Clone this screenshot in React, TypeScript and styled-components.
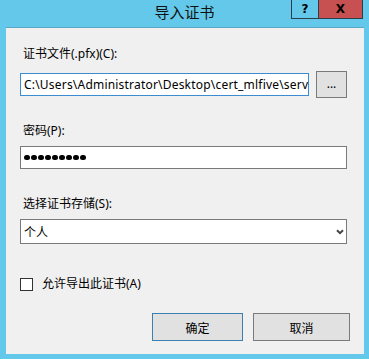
import React from "react";
import styled, { createGlobalStyle } from "styled-components";

const Global = createGlobalStyle`
  html, body { margin: 0; padding: 0; }
  body { background: #64C8EA; }
`;

const Window = styled.div`
  width: 369px;
  height: 359px;
  background: #64C8EA;
  display: flex;
  flex-direction: column;
  font-family: "Noto Sans", "Noto Sans CJK SC", sans-serif;
  font-size: 12px;
  color: #000;
  box-sizing: border-box;
`;

const TitleBar = styled.div`
  height: 27px;
  display: grid;
  grid-template-columns: 1fr auto 1fr;
  align-items: start;
  flex-shrink: 0;
`;

const Title = styled.div`
  grid-column: 2;
  font-family: "Noto Sans CJK SC", sans-serif;
  font-size: 15px;
  line-height: 24px;
  color: #111;
`;

const Controls = styled.div`
  grid-column: 3;
  justify-self: end;
  margin-right: 6px;
  display: flex;
  height: 19px;
`;

const CtrlButton = styled.div<{ $w: number; $bg: string }>`
  width: ${(p) => p.$w}px;
  height: 19px;
  box-sizing: border-box;
  background: ${(p) => p.$bg};
  border: 1px solid #2d3e48;
  border-top: none;
  & + & { border-left: none; }
  display: flex;
  align-items: center;
  justify-content: center;
  font-family: "DejaVu Sans", sans-serif;
  font-weight: bold;
  font-size: 12px;
  color: #000;
  line-height: 1;
`;

const Panel = styled.div`
  margin: 0 5px 5px 6px;
  flex: 1;
  background: #F0F0F0;
  border-top: 1px solid #5aa9c4;
  padding: 18px 17px 0 14px;
  display: flex;
  flex-direction: column;
`;

const Label = styled.div<{ $mt?: number }>`
  font-family: "Noto Sans", "Noto Sans CJK SC", sans-serif;
  font-size: 12px;
  line-height: 16px;
  margin-left: 3px;
  margin-top: ${(p) => p.$mt ?? 0}px;
  color: #000;
`;

const Row = styled.div<{ $mt?: number }>`
  display: flex;
  align-items: center;
  margin-top: ${(p) => p.$mt ?? 0}px;
`;

const Field = styled.div<{ $w?: number; $h: number; $focus?: boolean }>`
  ${(p) => (p.$w ? `width: ${p.$w}px;` : "flex: 1;")}
  height: ${(p) => p.$h}px;
  box-sizing: border-box;
  background: #fff;
  border: 1px solid ${(p) => (p.$focus ? "#3C8DD0" : "#7A7A7A")};
  display: flex;
  align-items: center;
  padding: 0 2px 0 3px;
  overflow: hidden;
  white-space: nowrap;
  font-size: 12px;
`;

const PathText = styled.span`
  font-family: "Noto Sans", sans-serif;
  font-size: 12px;
  letter-spacing: 0.2px;
`;

const BrowseButton = styled.div`
  width: 31px;
  height: 27px;
  box-sizing: border-box;
  margin-left: 7px;
  background: #E1E1E1;
  border: 1px solid #7A7A7A;
  display: flex;
  align-items: center;
  justify-content: center;
  font-size: 12px;
  line-height: 1;
  padding-bottom: 2px;
`;

const Dots = styled.div`
  display: flex;
  gap: 1.5px;
`;

const Dot = styled.span`
  width: 5.5px;
  height: 5.5px;
  border-radius: 50%;
  background: #000;
`;

const SelectText = styled.span`
  flex: 1;
  font-family: "Noto Sans CJK SC", sans-serif;
`;

const Check = styled.div`
  width: 13px;
  height: 13px;
  box-sizing: border-box;
  background: #fff;
  border: 1px solid #333;
  margin-right: 6px;
`;

const Buttons = styled.div`
  display: flex;
  justify-content: flex-end;
  gap: 10px;
  margin-top: 21px;
  margin-right: -3px;
`;

const DlgButton = styled.div<{ $w: number; $default?: boolean }>`
  width: ${(p) => p.$w}px;
  height: 28px;
  box-sizing: border-box;
  background: #E1E1E1;
  border: 1px solid ${(p) => (p.$default ? "#3C7FB1" : "#7A7A7A")};
  display: flex;
  align-items: center;
  justify-content: center;
  font-family: "Noto Sans CJK SC", sans-serif;
  font-size: 12px;
`;

const Chevron = () => (
  <svg width="8" height="6" viewBox="0 0 8 6">
    <path d="M1 1.2 L4 4.2 L7 1.2" fill="none" stroke="#444" strokeWidth="2" />
  </svg>
);

export default function App() {
  return (
    <>
      <Global />
      <Window>
        <TitleBar>
          <Title>导入证书</Title>
          <Controls>
            <CtrlButton $w={28} $bg="#64C8EA">?</CtrlButton>
            <CtrlButton $w={44} $bg="#C75050">X</CtrlButton>
          </Controls>
        </TitleBar>
        <Panel>
          <Label>证书文件(.pfx)(C):</Label>
          <Row $mt={9}>
            <Field $w={289} $h={23} $focus>
              <PathText>C:\Users\Administrator\Desktop\cert_mlfive\serv</PathText>
            </Field>
            <BrowseButton>...</BrowseButton>
          </Row>
          <Label $mt={25}>密码(P):</Label>
          <Row $mt={7}>
            <Field $h={23}>
              <Dots>
                {Array.from({ length: 9 }).map((_, i) => (
                  <Dot key={i} />
                ))}
              </Dots>
            </Field>
          </Row>
          <Label $mt={27}>选择证书存储(S):</Label>
          <Row $mt={7}>
            <Field $h={25}>
              <SelectText>个人</SelectText>
              <Chevron />
            </Field>
          </Row>
          <Row $mt={32}>
            <Check />
            <Label>允许导出此证书(A)</Label>
          </Row>
          <Buttons>
            <DlgButton $w={91} $default>确定</DlgButton>
            <DlgButton $w={97}>取消</DlgButton>
          </Buttons>
        </Panel>
      </Window>
    </>
  );
}
